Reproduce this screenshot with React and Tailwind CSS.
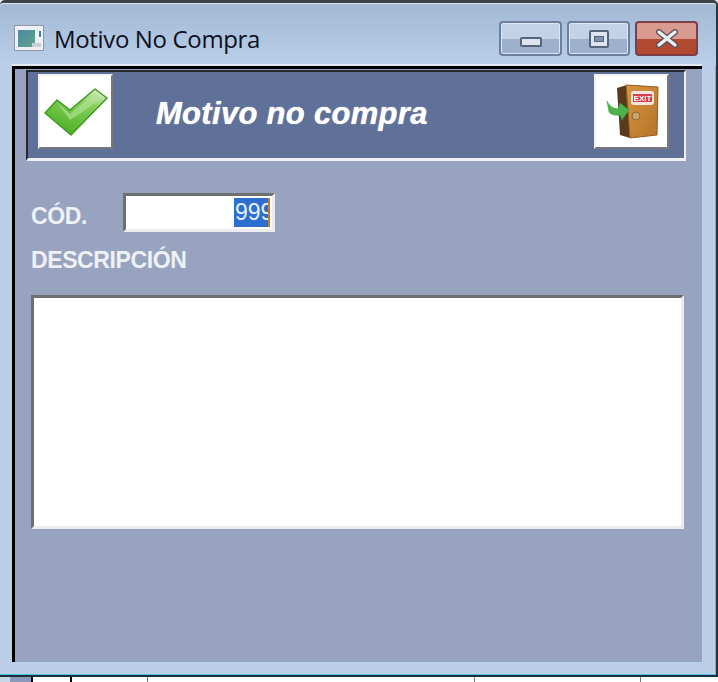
import React from "react";

function AppIcon() {
  return (
    <svg width="30" height="26" viewBox="0 0 30 26" className="block -mt-[2px] blur-[0.4px]">
      <defs>
        <linearGradient id="appFill" x1="0" y1="0" x2="1" y2="1">
          <stop offset="0" stopColor="#4f86a8" />
          <stop offset="1" stopColor="#5fa585" />
        </linearGradient>
      </defs>
      <rect x="0.5" y="0.5" width="29" height="25" fill="#eef1f5" stroke="#8d97a5" />
      <rect x="4" y="5" width="17" height="17" fill="url(#appFill)" />
      <rect x="25" y="6" width="2" height="6" fill="#3d7fb0" />
      <rect x="18" y="18" width="9" height="4" fill="#c9ced4" />
    </svg>
  );
}

function WinButton({ className, children }) {
  return (
    <div className={"h-[35px] rounded-[4px] border-2 overflow-hidden flex items-center justify-center " + className}>
      {children}
    </div>
  );
}

function CheckIcon() {
  return (
    <svg width="64" height="48" viewBox="0 0 64 48" className="block blur-[0.4px]">
      <defs>
        <linearGradient id="checkFill" x1="0.8" y1="0" x2="0.3" y2="1">
          <stop offset="0" stopColor="#d8ecc9" />
          <stop offset="0.3" stopColor="#86cf5a" />
          <stop offset="1" stopColor="#49ad22" />
        </linearGradient>
      </defs>
      <path
        d="M1 25 L13 12 L26 22 L51 1 L63 10 L27 47 Z"
        fill="url(#checkFill)"
        stroke="#3f9a20"
        strokeWidth="1.5"
        strokeLinejoin="round"
      />
      <path d="M13 15 L26 26 L51 5 L58 10 L34 27 L26 32 Z" fill="#b4e296" opacity="0.65" />
    </svg>
  );
}

function ExitIcon() {
  return (
    <svg width="54" height="56" viewBox="0 0 54 56" className="block ml-[3px] blur-[0.4px]">
      <defs>
        <linearGradient id="doorFill" x1="0" y1="0" x2="1" y2="1">
          <stop offset="0" stopColor="#d8963f" />
          <stop offset="1" stopColor="#b5722a" />
        </linearGradient>
      </defs>
      <path d="M11 4 L21 1 L24 54 L14 51 Z" fill="#5a3a1c" />
      <path d="M20 1 L52 3 L51 51 L24 54 Z" fill="url(#doorFill)" stroke="#8f5a22" />
      <rect x="25" y="7" width="23" height="14" rx="3" fill="#f3e5e2" />
      <rect x="27" y="10" width="19" height="8" fill="#d9404f" />
      <text x="36.5" y="17" textAnchor="middle" fontSize="8" fontWeight="700" fill="#fff" fontFamily="Liberation Sans, sans-serif">EXIT</text>
      <circle cx="30" cy="32" r="4" fill="#c9a36a" stroke="#8c6a3a" />
      <path d="M1 17 Q4 24 12 25 L14 19 L23 26 L16 36 L14 31 Q6 32 3 28 Z" fill="#4cb34a" stroke="#3a9a3a" strokeWidth="0.5" />
    </svg>
  );
}

function Tile({ children }) {
  return (
    <div className="w-[75px] h-[75px] shrink-0 bg-white border-t-2 border-l-2 border-t-[#f2f2f2] border-l-[#f2f2f2] border-r-2 border-b-2 border-r-[#77797c] border-b-[#77797c] flex items-center justify-center">
      {children}
    </div>
  );
}

export default function App() {
  return (
    <div className="w-[718px] h-[682px] overflow-hidden bg-[#e8edf4] flex flex-col font-['Liberation_Sans',sans-serif]">
      {/* window */}
      <div className="h-[677px] shrink-0 flex flex-col rounded-t-[5px] border-t-[3px] border-t-[#3d4147] border-r-2 border-r-[#23353f] border-b-2 border-b-[#1b2f3a] bg-[#bccfe8] shadow-[inset_-1px_-1px_0_#4fc3dc]">
        <div className="h-[63px] shrink-0 flex items-center pl-[14px] pr-[18px] pt-[8px] rounded-t-[4px] bg-gradient-to-b from-[#a3b8d3] to-[#bad0ea] border-t border-t-[#dce6f2]">
          <AppIcon />
          <span className="ml-[10px] text-[24px] leading-[30px] text-[#10101c] font-['Open_Sans',sans-serif] tracking-[-0.35px]">Motivo No Compra</span>
          <div className="ml-auto flex gap-[5px] -mt-[1px]">
            <WinButton className="w-[63px] border-[#6c7f9c] shadow-[inset_0_0_0_1px_#dde6f1] bg-gradient-to-b from-[#c3d2e6] from-50% to-[#9db1cc] to-50%">
              <div className="w-[22px] h-[10px] mt-[6px] rounded-[2px] bg-[#dfe5ee] border-2 border-[#56657c]" />
            </WinButton>
            <WinButton className="w-[63px] border-[#6c7f9c] shadow-[inset_0_0_0_1px_#dde6f1] bg-gradient-to-b from-[#c3d2e6] from-50% to-[#9db1cc] to-50%">
              <div className="w-[20px] h-[18px] rounded-[2px] bg-[#dfe5ee] border-2 border-[#56657c] flex items-center justify-center">
                <div className="w-[10px] h-[6px] bg-[#7f90ad] border border-[#56657c]" />
              </div>
            </WinButton>
            <WinButton className="w-[63px] border-[#7c3f49] bg-gradient-to-b from-[#d99a90] from-50% to-[#b14a31] to-50%">
              <svg width="26" height="19" viewBox="0 0 26 19" className="block">
                <path d="M5 3 L21 16 M21 3 L5 16" stroke="#55505a" strokeWidth="6" strokeLinecap="round" />
                <path d="M5 3 L21 16 M21 3 L5 16" stroke="#eceff3" strokeWidth="3.5" strokeLinecap="round" />
              </svg>
            </WinButton>
          </div>
        </div>

        {/* client area */}
        <div className="flex-1 ml-[12px] mr-[14px] mb-[13px] border-t-[3px] border-t-black border-l-[3px] border-l-black bg-[#98a4bf] shadow-[0_-2px_0_#e3eaf3] flex flex-col">
          <div className="mt-[1px] ml-[11px] mr-[16px] h-[91px] shrink-0 flex items-start justify-between border-t-2 border-l-2 border-t-[#26282e] border-l-[#26282e] border-r-2 border-b-[3px] border-r-[#eef0f4] border-b-[#eef0f4] bg-[#5f7198] pl-[10px] pr-[15px] pt-[2px]">
            <Tile><CheckIcon /></Tile>
            <span className="flex-1 ml-[43px] mt-[22px] text-[31px] leading-[36px] font-bold italic text-white tracking-[0.3px] [text-shadow:0_0_1px_#ffffff]">Motivo no compra</span>
            <Tile><ExitIcon /></Tile>
          </div>

          <div className="mt-[31px] ml-[16px] flex items-center">
            <span className="w-[92px] text-[23px] font-bold text-[#eef1f6] tracking-[-0.4px] mt-[7px]">CÓD.</span>
            <div className="w-[152px] h-[39px] bg-white border-t-[3px] border-l-[3px] border-t-[#6f6f6f] border-l-[#6f6f6f] border-r-[3px] border-b-[3px] border-r-[#ececf0] border-b-[#ececf0] flex justify-end items-center pr-[2px]">
              <span className="w-[36px] h-[29px] overflow-hidden bg-[#2c6fd1] text-[#e6eefc] text-[23px] leading-[29px] pl-[1px] border-r-2 border-r-[#c57a2c] whitespace-nowrap">999</span>
            </div>
          </div>

          <div className="mt-[9px] ml-[16px] text-[23px] leading-[34px] font-bold text-[#eef1f6] tracking-[-0.4px]">DESCRIPCIÓN</div>

          <div className="mt-[18px] ml-[16px] w-[653px] h-[234px] bg-white border-t-[3px] border-l-[3px] border-t-[#6f6f6f] border-l-[#6f6f6f] border-r-[3px] border-b-[3px] border-r-[#ececf0] border-b-[#ececf0]" />
        </div>
      </div>

      {/* what shows below the window */}
      <div className="flex-1 flex bg-white">
        <div className="w-[10px] bg-[#c8d6e8]" />
        <div className="w-[21px] bg-[#8b9ab8]" />
        <div className="w-[41px] border-l-2 border-r-2 border-black bg-white" />
        <div className="w-[76px] border-r border-[#777]" />
        <div className="w-[327px] border-r border-[#777]" />
        <div className="w-[166px] border-r border-[#777]" />
        <div className="flex-1" />
      </div>
    </div>
  );
}
